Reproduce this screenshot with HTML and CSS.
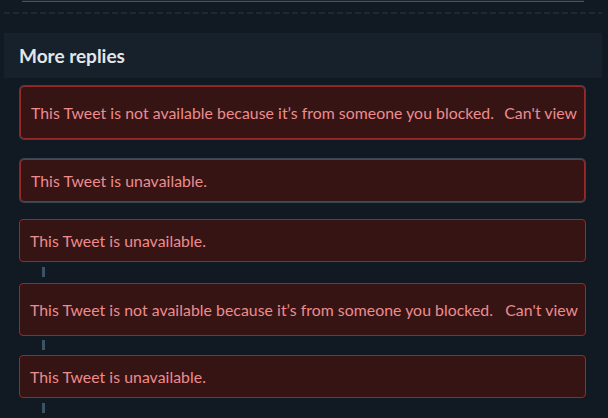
FILE: index.html
```html
<!DOCTYPE html>
<html lang="en">
<head>
<meta charset="utf-8">
<title>More replies</title>
<link rel="stylesheet" href="styles.css">
</head>
<body>
  <div class="topbar"></div>
  <div class="divider"></div>
  <h2 class="section-header">More replies</h2>
  <div class="replies">
    <div class="card card--ringed card--wide card--first">
      <span>This Tweet is not available because it’s from someone you blocked.</span>
      <span class="card__action">Can't view</span>
    </div>
    <div class="card card--ringed card--second">This Tweet is unavailable.</div>
    <div class="card card--third">This Tweet is unavailable.</div>
    <div class="connector"></div>
    <div class="card card--wide">
      <span>This Tweet is not available because it’s from someone you blocked.</span>
      <span class="card__action">Can't view</span>
    </div>
    <div class="connector connector--tight"></div>
    <div class="card">This Tweet is unavailable.</div>
    <div class="connector"></div>
  </div>
</body>
</html>
```

FILE: styles.css
```css
html, body {
  margin: 0;
  padding: 0;
  background: #111922;
  font-family: "Lato", "Noto Sans", sans-serif;
}

.topbar {
  height: 1px;
  margin: 0 24px 0 22px;
  background: #1b242e;
  border-bottom: 1px solid #46515d;
}

.divider {
  height: 2px;
  margin: 10px 6px 0 4px;
  background: repeating-linear-gradient(to right, #1c2935 0 6px, transparent 6px 9px);
}

.section-header {
  margin: 19px 6px 0 4px;
  height: 45px;
  padding: 0 0 0 15px;
  background: #17212b;
  color: #e2e7ec;
  font-size: 19px;
  font-weight: 700;
  line-height: 45px;
}

.replies {
  display: flex;
  flex-direction: column;
  padding: 0 22px 0 19px;
}

.card {
  border: 1px solid #962a2a;
  border-radius: 4px;
  background: #361414;
  color: #ed8c8e;
  font-size: 15.8px;
  letter-spacing: 0.05px;
  line-height: 21px;
  padding: 10px;
}

.card--ringed {
  margin-left: 1px;
  margin-right: 1px;
  box-shadow: 0 0 0 1px #384452;
}

.card--wide {
  display: flex;
  justify-content: space-between;
  padding: 15px 7px 15px 10px;
}

.card--first {
  margin-top: 8px;
}

.card--second {
  margin-top: 20px;
}

.card--third {
  margin-top: 17px;
}

.connector {
  width: 3px;
  height: 10px;
  margin: 5px 0 6px 23px;
  background: #3c5366;
}

.connector--tight {
  margin-top: 4px;
  margin-bottom: 5px;
}
```
